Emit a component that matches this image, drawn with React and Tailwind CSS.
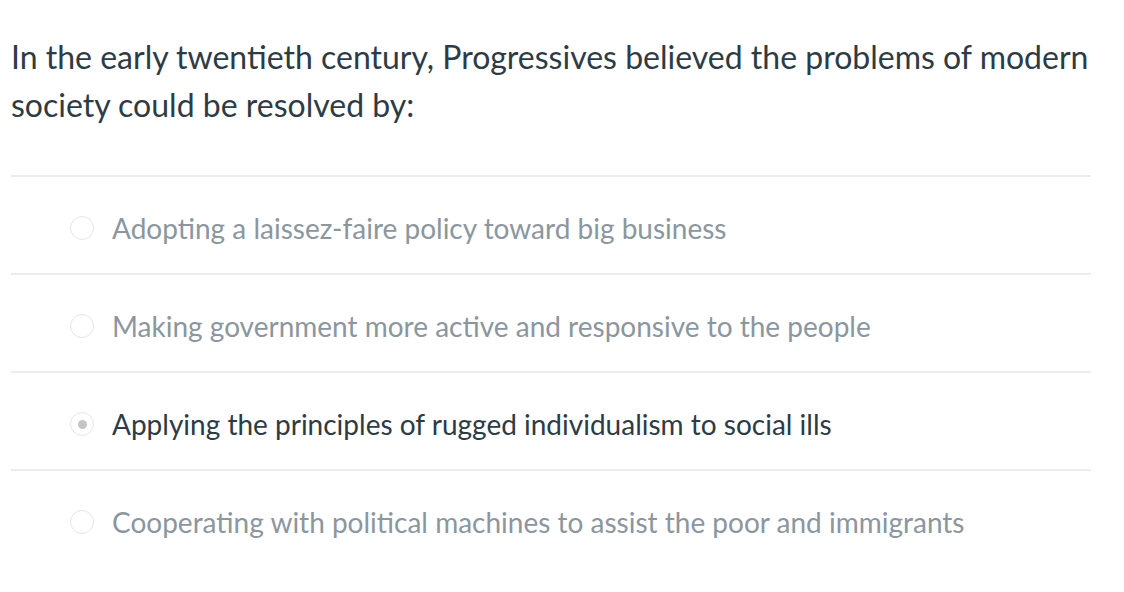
import React from "react";

const answers = [
  { text: "Adopting a laissez-faire policy toward big business", selected: false },
  { text: "Making government more active and responsive to the people", selected: false },
  { text: "Applying the principles of rugged individualism to social ills", selected: true },
  { text: "Cooperating with political machines to assist the poor and immigrants", selected: false },
];

function Radio({ checked }) {
  return (
    <span className="flex h-6 w-6 shrink-0 items-center justify-center rounded-full border border-[#e6e6e6] bg-white">
      {checked && <span className="h-[9px] w-[9px] rounded-full bg-[#c4c4c4]" />}
    </span>
  );
}

export default function App() {
  return (
    <main className="min-h-screen bg-white font-['Lato',sans-serif]">
      <div className="w-[1080px] ml-[11px] pt-[33px]">
        <h1 className="text-[32px] leading-[48px] text-[#2d3b45] font-normal">
          In the early twentieth century, Progressives believed the problems of modern society could be resolved by:
        </h1>

        <div className="mt-[46px]">
          {answers.map((a) => (
            <div
              key={a.text}
              className="flex items-center h-[98px] border-t-2 border-[#ececec] pl-[59px] pt-[6px]"
            >
              <Radio checked={a.selected} />
              <span
                className={
                  "ml-[18px] text-[28px] " +
                  (a.selected ? "text-[#2d3b45]" : "text-[#8b969e]")
                }
              >
                {a.text}
              </span>
            </div>
          ))}
        </div>
      </div>
    </main>
  );
}
